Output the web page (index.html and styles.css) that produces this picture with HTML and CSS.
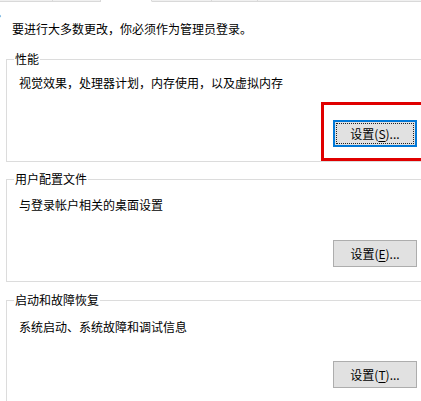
FILE: index.html
```html
<!DOCTYPE html>
<html lang="zh-CN">
<head>
    <meta charset="UTF-8">
    <meta name="viewport" content="width=device-width, initial-scale=1.0">
    <title>系统属性 - 高级</title>
    <link rel="stylesheet" href="styles.css">
</head>
<body>
    <div class="page">
        <div class="tabs">
            <div class="tab" style="width: 52px"></div>
            <div class="tab" style="width: 47px"></div>
            <div class="tab active" style="width: 50px"></div>
            <div class="tab" style="width: 59px"></div>
            <div class="tab" style="width: 45px"></div>
            <div class="tab rest"></div>
        </div>
        <div class="chevron">›</div>
        <p class="notice">要进行大多数更改，你必须作为管理员登录。</p>

        <fieldset class="group perf">
            <legend>性能</legend>
            <p class="desc">视觉效果，处理器计划，内存使用，以及虚拟内存</p>
            <div class="btn-row">
                <button class="btn focused"><span class="focus-ring">设置(<u>S</u>)...</span></button>
                <div class="highlight"></div>
            </div>
        </fieldset>

        <fieldset class="group profile">
            <legend>用户配置文件</legend>
            <p class="desc">与登录帐户相关的桌面设置</p>
            <div class="btn-row">
                <button class="btn">设置(<u>E</u>)...</button>
            </div>
        </fieldset>

        <fieldset class="group startup">
            <legend>启动和故障恢复</legend>
            <p class="desc">系统启动、系统故障和调试信息</p>
            <div class="btn-row">
                <button class="btn">设置(<u>T</u>)...</button>
            </div>
        </fieldset>
    </div>
</body>
</html>
```
FILE: styles.css
```css
body {
    margin: 0;
    padding: 0;
    background: #fff;
    overflow: hidden;
    font-family: "Noto Sans CJK SC", "Noto Sans", sans-serif;
    font-size: 12px;
    color: #000;
}
.page {
    width: 440px;
    height: 401px;
    overflow: hidden;
}
.tabs {
    display: flex;
    height: 2px;
}
.tab {
    height: 1px;
    border-bottom: 1px solid #d9d9d9;
    border-right: 1px solid #d9d9d9;
    background: #f0f0f0;
}
.tab.active {
    background: #fff;
    border-bottom-color: #fff;
}
.tab.rest {
    flex: 1;
    border-right: none;
}
.chevron {
    height: 10px;
    margin: 8px 0 0 -2px;
    font-size: 10px;
    line-height: 10px;
    color: #555;
}
.notice {
    margin: 1px 0 0 12px;
    line-height: 16px;
}
.group {
    margin: 14px 0 0 6px;
    padding: 0 22px 14px 12px;
    border: 1px solid #dcdcdc;
    min-width: 0;
}
.group.profile {
    margin-top: 9px;
}
.group.startup {
    margin-top: 10px;
}
.group legend {
    margin-left: -5px;
    padding: 0 1px;
    line-height: 16px;
}
.desc {
    margin: 8px 0 0 0;
    line-height: 16px;
}
.profile .desc {
    margin-top: 10px;
}
.startup .desc {
    margin-top: 11px;
}
.btn-row {
    position: relative;
    display: flex;
    justify-content: flex-end;
    margin-top: 29px;
}
.profile .btn-row {
    margin-top: 27px;
}
.startup .btn-row {
    margin-top: 26px;
}
.btn {
    width: 84px;
    height: 27px;
    padding: 0;
    background: #e1e1e1;
    border: 1px solid #adadad;
    font-family: inherit;
    font-size: 12px;
    color: #000;
    line-height: 16px;
}
.btn u {
    text-underline-offset: 2px;
}
.btn.focused {
    border: 2px solid #0078d7;
    padding: 1px;
}
.focus-ring {
    display: flex;
    align-items: center;
    justify-content: center;
    height: 100%;
    outline: 1px dotted #222;
    outline-offset: -1px;
}
.highlight {
    position: absolute;
    top: -18px;
    left: calc(100% - 96px);
    width: 140px;
    height: 59px;
    border: 3px solid #e00000;
    box-sizing: border-box;
}
```
